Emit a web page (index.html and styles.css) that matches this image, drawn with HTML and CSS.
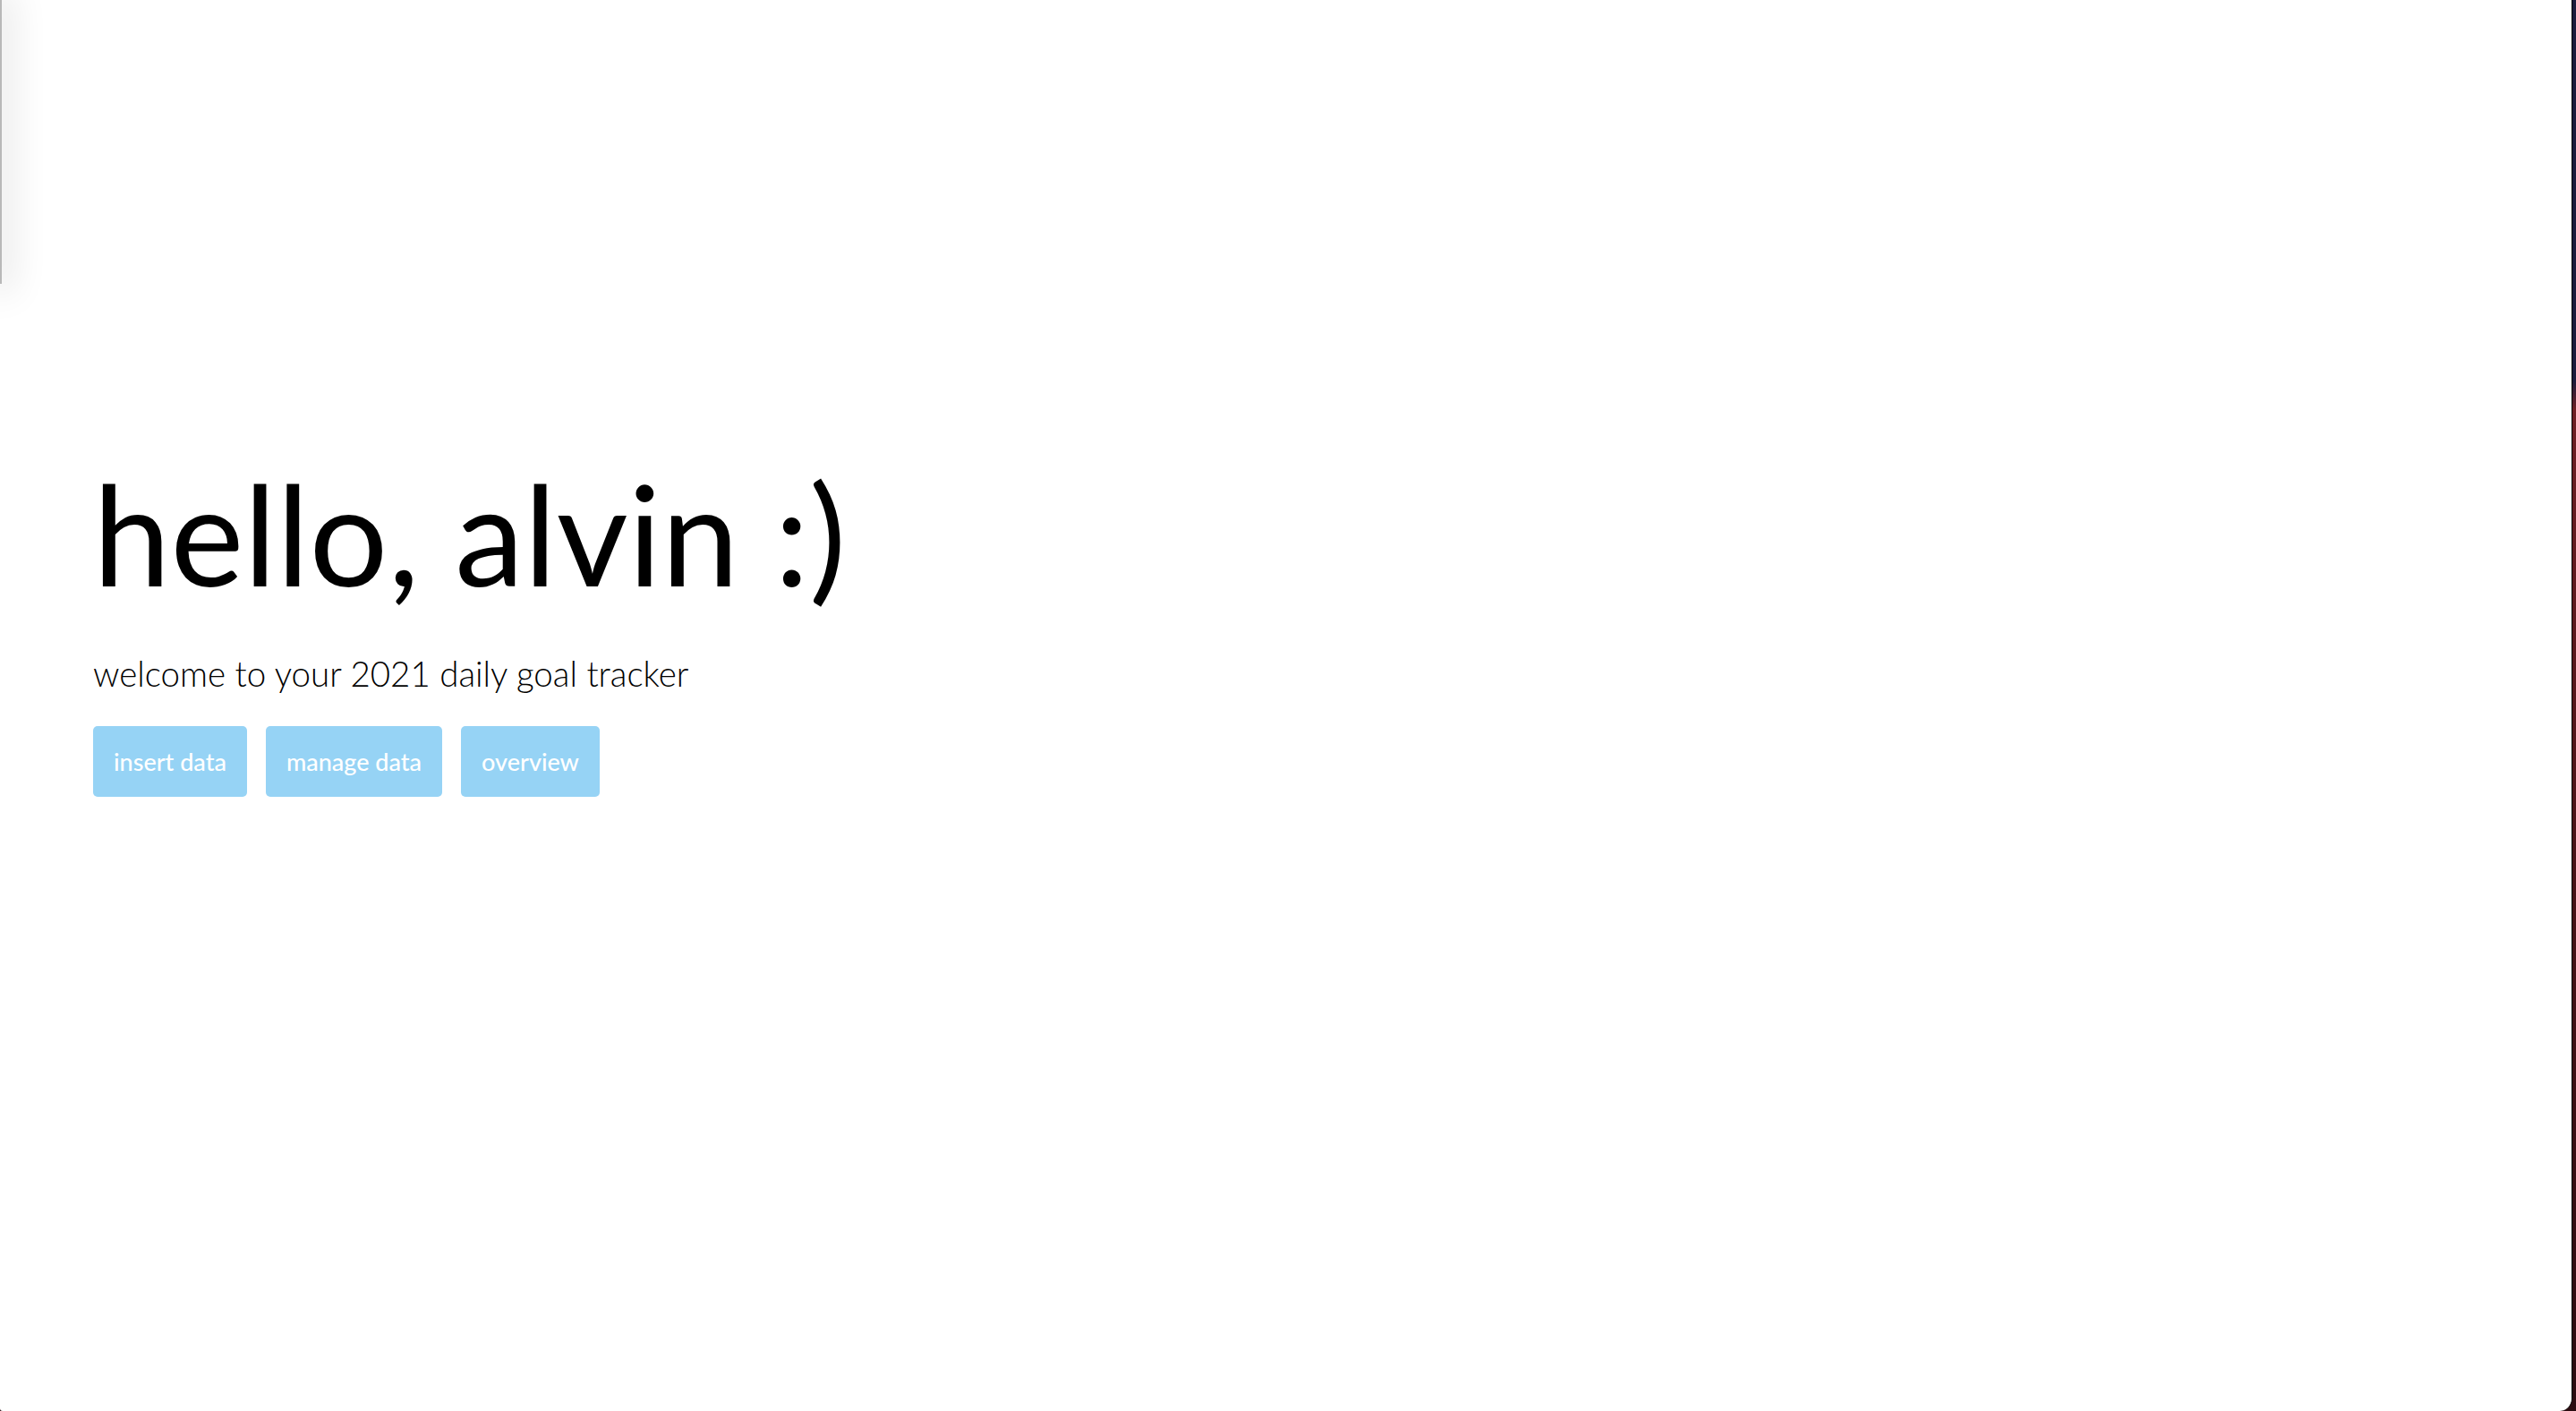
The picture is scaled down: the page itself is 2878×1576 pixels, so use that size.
FILE: index.html
```html
<!DOCTYPE html>
<html lang="en">
<head>
<meta charset="utf-8">
<title>goal tracker</title>
<link rel="stylesheet" href="styles.css">
</head>
<body>
<div class="desktop">
  <div class="window">
    <div class="side-shadow"></div>
    <main class="hero">
      <h1 class="title">hello, alvin :)</h1>
      <p class="subtitle">welcome to your 2021 daily goal tracker</p>
      <nav class="actions">
        <a class="btn" href="#">insert data</a>
        <a class="btn" href="#">manage data</a>
        <a class="btn" href="#">overview</a>
      </nav>
    </main>
  </div>
</div>
</body>
</html>
```
FILE: styles.css
```css
html, body {
  margin: 0;
  padding: 0;
  height: 100%;
}
body {
  font-family: Lato, "Open Sans", sans-serif;
  background: #10101e;
}
.desktop {
  height: 1576px;
  display: flex;
  background: linear-gradient(180deg, #1b1c3c 0%, #1b1c3c 27%, #6e1f24 29%, #4a1418 60%, #2a0b10 100%);
}
.window {
  position: relative;
  flex: 1;
  margin-right: 4px;
  background: #ffffff;
  border-right: 1px solid #000;
  border-bottom-right-radius: 14px;
  border-bottom-left-radius: 3px;
  overflow: hidden;
}
.side-shadow {
  position: absolute;
  left: 0;
  top: 0;
  width: 2px;
  height: 317px;
  background: #b8b8b8;
  box-shadow: 0 0 40px 10px rgba(0, 0, 0, 0.12);
}
.hero {
  padding: 502px 0 0 104px;
}
.title {
  margin: 0;
  font-family: Lato, sans-serif;
  font-weight: 400;
  font-size: 155px;
  line-height: 1.2;
  color: #000;
}
.subtitle {
  margin: 41px 0 0 0;
  font-family: Lato, sans-serif;
  font-weight: 300;
  font-size: 38.5px;
  line-height: 1.2;
  color: #000;
}
.actions {
  display: flex;
  gap: 21px;
  margin-top: 36px;
}
.btn {
  display: block;
  padding: 22px 23px;
  background: #96d3f5;
  color: #fff;
  border-radius: 5px;
  font-family: Lato, sans-serif;
  font-weight: 500;
  font-size: 27px;
  line-height: 35px;
  text-decoration: none;
}
```
